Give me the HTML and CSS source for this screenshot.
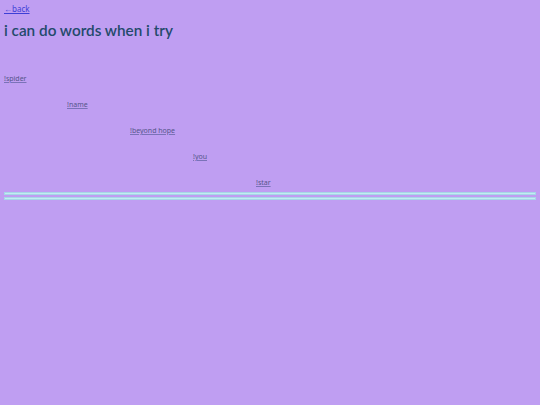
FILE: index.html
```html
<!DOCTYPE html>
<html>
<head>
<meta charset="utf-8">
<link rel="stylesheet" href="styles.css">
</head>
<body>
<a class="back" href="#">←back</a>
<h1 class="title">i can do words when i try</h1>
<div class="list">
  <a class="item s0" href="#">!spider</a>
  <a class="item s1" href="#">!name</a>
  <a class="item s2" href="#">!beyond hope</a>
  <a class="item s3" href="#">!you</a>
  <a class="item s4" href="#">!star</a>
</div>
<hr class="rule">
<hr class="rule">
</body>
</html>
```
FILE: styles.css
```css
html, body { background: #bf9ef2; }
body {
  margin: 0;
  padding: 4px;
  font-family: "Noto Sans", sans-serif;
}
.back {
  display: block;
  font-size: 8px;
  line-height: 9px;
  color: #3d3fd6;
  text-decoration: underline;
}
.title {
  margin: 7px 0 0 0;
  font-family: Lato, sans-serif;
  font-size: 15.3px;
  line-height: 20px;
  font-weight: 600;
  color: #234a6b;
}
.list {
  display: flex;
  flex-direction: column;
  align-items: flex-start;
  margin-top: 33.5px;
  gap: 16.2px;
}
.item {
  font-size: 7px;
  line-height: 10px;
  color: #55558a;
  text-decoration: underline;
  text-decoration-color: #7a72b8;
}
.s1 { margin-left: 63px; }
.s2 { margin-left: 126px; }
.s3 { margin-left: 189px; }
.s4 { margin-left: 252px; }
.rule {
  margin: 2px 0 0 0;
  height: 1px;
  border: 1px solid #a8d6e8;
  background: #c2ecf2;
}
.list + .rule { margin-top: 4px; }
```
